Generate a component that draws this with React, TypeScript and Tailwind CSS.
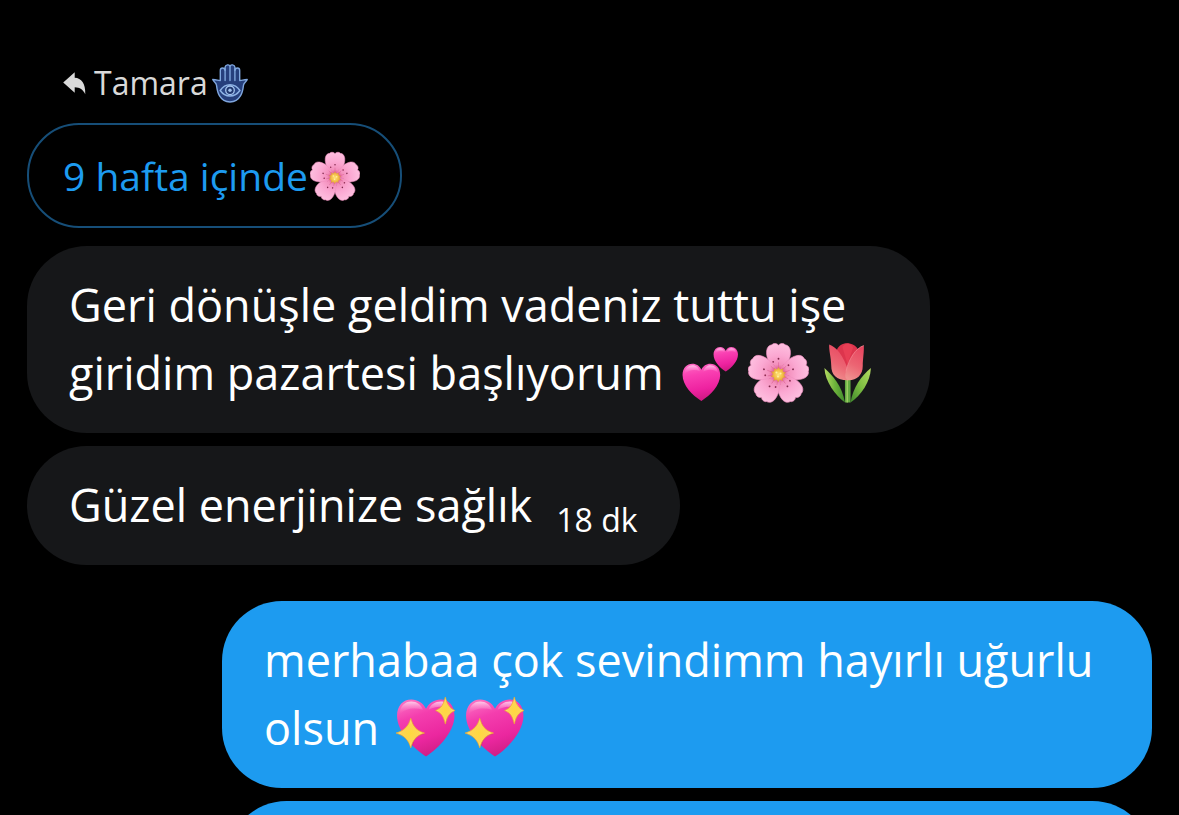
import type { ReactNode } from "react";

type EmojiProps = { className?: string };

const inlineEmoji = "mx-1 inline-block size-[61px] align-[-13px]";

const petalAngles = [0, 72, 144, 216, 288];

function ReplyArrow() {
  return (
    <svg viewBox="0 0 22 22" className="h-[23px] w-[23px]" fill="#d9d9d9" aria-hidden="true">
      <path d="M11.200.3v5.300C17.600 6 21.600 10.600 21.300 21.400c-2.200-4.600-5-6.600-10.100-6.700v5.200L.2 10z" />
    </svg>
  );
}

function Hamsa({ className }: EmojiProps) {
  return (
    <svg viewBox="0 0 36 42" className={className} role="img" aria-label="🪬">
      <path
        d="M8.300 18.500V8.400c0-3.200 4.300-3.200 4.800 0V5.200c.4-2.900 4.200-2.900 4.900-1.200.7-1.700 4.500-1.700 4.900 1.200v3.200c.5-3.200 4.800-3.200 4.800 0v10.100c2.400.1 3.500-.9 7.500-1-.8 2.400-3.300 2.800-3.700 5.700-.5 4-.8 7-2.900 10.500-2.100 3.600-5.400 6.300-10.600 6.300S9.500 37.300 7.400 33.700c-2.100-3.500-2.400-6.500-2.900-10.500-.4-2.900-2.900-3.300-3.700-5.700 4 .1 5.100 1.100 7.500 1z"
        fill="#263f7c"
        stroke="#7fa6dd"
        strokeWidth="1.400"
        strokeLinejoin="round"
      />
      <path d="M13.100 7v11.500M18 4v14.500M22.900 7v11.500" fill="none" stroke="#7fa6dd" strokeWidth="1.400" strokeLinecap="round" />
      <path d="M8.200 28.500c5-7.600 14.600-7.600 19.700 0-5.100 7.300-14.700 7.300-19.700 0z" fill="#2a4687" stroke="#8fb4e6" strokeWidth="1.400" />
      <circle cx="18" cy="28.300" r="4.300" fill="#21376f" stroke="#a5c6ef" strokeWidth="1.300" />
      <circle cx="18" cy="28.300" r="1.700" fill="#9dc0ec" />
    </svg>
  );
}

function Blossom({ className }: EmojiProps) {
  return (
    <svg viewBox="0 0 60 60" className={className} role="img" aria-label="🌸">
      <defs>
        <radialGradient id="petal" gradientUnits="userSpaceOnUse" cx="30" cy="31" r="30">
          <stop offset="0.100" stopColor="#d94f84" />
          <stop offset="0.300" stopColor="#f391bd" />
          <stop offset="0.600" stopColor="#fba8d2" />
          <stop offset="1" stopColor="#fec0e0" />
        </radialGradient>
        <radialGradient id="pollen">
          <stop offset="0" stopColor="#ffe47b" />
          <stop offset="0.600" stopColor="#f2bd45" />
          <stop offset="1" stopColor="#d98d3c" />
        </radialGradient>
      </defs>
      {petalAngles.map((angle) => (
        <g key={angle} transform={`rotate(${angle} 30 31.500)`}>
          <path
            d="M30 31.500C24 26.500 17.200 17 18.300 8.500c.5-3.500 2.700-5.600 5.200-5.700 1-1.700 4.900-2 6.500.4 1.600-2.400 5.500-2.100 6.500-.4 2.500.1 4.700 2.200 5.200 5.700C42.800 17 36 26.500 30 31.500z"
            fill="url(#petal)"
            stroke="#f08fc0"
            strokeWidth="0.600"
          />
          <path d="M30 27v-7M28 28l-3-6M32 28l3-6" stroke="#d7588e" strokeWidth="0.500" fill="none" />
          <circle cx="30" cy="16.500" r="0.900" fill="#7d2448" />
          <circle cx="24.800" cy="19.500" r="0.900" fill="#8d2a50" />
        </g>
      ))}
      <path
        d="M30 24.500l1.600 2.600 2.900-1-.2 3 2.900.8-1.800 2.300 1.700 2.500-3 .6v3l-2.700-1.300L29.800 39.600l-1.600-2.500-3 .9.300-3-2.900-.9 1.900-2.300-1.800-2.500 3-.5-.1-3 2.800 1.200z"
        fill="url(#pollen)"
      />
      <g fill="#fff0a0">
        <circle cx="28" cy="30" r="1" />
        <circle cx="32" cy="31" r="1" />
        <circle cx="29.500" cy="34" r="1" />
      </g>
    </svg>
  );
}

function TwoHearts({ className }: EmojiProps) {
  return (
    <svg viewBox="0 0 60 60" className={className} role="img" aria-label="💕">
      <defs>
        <linearGradient id="twoHearts" x1="0" y1="0" x2="0.200" y2="1">
          <stop offset="0" stopColor="#ff6fc5" />
          <stop offset="0.350" stopColor="#f93fb2" />
          <stop offset="0.750" stopColor="#ee22a0" />
          <stop offset="1" stopColor="#d31a86" />
        </linearGradient>
        <linearGradient id="twoHeartsShine" x1="0" y1="0" x2="0" y2="1">
          <stop offset="0" stopColor="#ffd0ef" stopOpacity="0.850" />
          <stop offset="1" stopColor="#ff7aca" stopOpacity="0" />
        </linearGradient>
      </defs>
      <path d="M22 58C13 52.500 3.500 42.500 3.500 32.500c0-6.800 4.200-11 9.700-11 4 0 7.100 2.200 8.800 5.800 1.700-3.600 4.800-5.800 8.800-5.800 5.500 0 9.700 4.200 9.700 11C40.500 42.500 31 52.500 22 58z" fill="url(#twoHearts)" />
      <path d="M5.500 31.500c0-5 3-8.700 7.700-8.700 4 0 6.300 2.500 7.300 6-5-2-10.700-1.600-15 2.700zM24 29c1-4 3.500-6.200 6.800-6.200 4.300 0 7.200 3 7.700 7.700-4-4-9.500-3.700-14.500-1.500z" fill="url(#twoHeartsShine)" />
      <path d="M46 29C40 25.500 34 18.700 34 12.300 34 8 36.900 5 40.500 5c2.500 0 4.500 1.400 5.500 3.900C47 6.400 49 5 51.500 5 55.100 5 58 8 58 12.300 58 18.700 52 25.500 46 29z" fill="url(#twoHearts)" />
      <path d="M35.500 11c.3-3 2.200-4.900 5-4.900 2.500 0 4 1.500 4.700 4-3.400-1.500-6.700-1.100-9.700.9zM47 10c.7-2.500 2.200-3.900 4.500-3.900 2.900 0 4.800 1.900 5 4.900-2.900-2-6.200-2.500-9.500-1z" fill="url(#twoHeartsShine)" />
    </svg>
  );
}

function Tulip({ className }: EmojiProps) {
  return (
    <svg viewBox="0 0 60 60" className={className} role="img" aria-label="🌷">
      <defs>
        <linearGradient id="tulipPetal" x1="0.600" y1="0" x2="0.300" y2="1">
          <stop offset="0" stopColor="#e84760" />
          <stop offset="0.550" stopColor="#ec6573" />
          <stop offset="1" stopColor="#f09190" />
        </linearGradient>
        <linearGradient id="tulipLeaf" x1="0" y1="0" x2="1" y2="0">
          <stop offset="0" stopColor="#b6dc62" />
          <stop offset="0.500" stopColor="#6fb43c" />
          <stop offset="1" stopColor="#3f8a2c" />
        </linearGradient>
        <linearGradient id="tulipLeafRight" x1="1" y1="0" x2="0" y2="1">
          <stop offset="0" stopColor="#b6dc62" />
          <stop offset="0.500" stopColor="#7fbf43" />
          <stop offset="1" stopColor="#3f8a2c" />
        </linearGradient>
      </defs>
      <path d="M27.500 35h5.500v24.500h-5.500z" fill="#63aa42" />
      <path d="M29 35h1.500v24.500H29z" fill="#9bcb62" />
      <path d="M27.500 59.500C18 52.500 8 39 7.300 25.500c8.200 7.500 17.200 17 20.200 34z" fill="url(#tulipLeaf)" />
      <path d="M33 59.500c2-14 11-27 20-34C52.500 39 43.500 52.500 33 59.500z" fill="url(#tulipLeafRight)" />
      <path d="M19.500 8C21 3.500 25 1.200 29.500 1.200S39 3.500 40.500 8L36 30H24z" fill="#dd354d" />
      <path d="M25 5c1.500-2.500 3.500-3.500 5-3.500S34 3 35.500 5.500L30 22z" fill="#e83f55" />
      <path d="M12 2.500C19 5 26 13 31 29c.4 4 .2 7-1 8.500C19 37.500 14 32 14 23 14 16 11.500 8 12 2.500z" fill="url(#tulipPetal)" />
      <path d="M46 3.500C38 6 31 17 28 31c-.5 3 0 5 2 6.500 9 .5 15-5 15-14C45 17 46.500 9 46 3.500z" fill="url(#tulipPetal)" />
      <path d="M46 3.500C38 6 31 17 28.500 29" stroke="#f78c95" strokeWidth="0.700" fill="none" />
    </svg>
  );
}

function SparklingHeart({ className }: EmojiProps) {
  return (
    <svg viewBox="0 0 60 60" className={className} role="img" aria-label="💖">
      <defs>
        <linearGradient id="bigHeart" x1="0.200" y1="0" x2="0.550" y2="1">
          <stop offset="0" stopColor="#fb70c3" />
          <stop offset="0.300" stopColor="#f43eae" />
          <stop offset="0.700" stopColor="#eb279f" />
          <stop offset="1" stopColor="#cf1e84" />
        </linearGradient>
        <linearGradient id="bigHeartShine" x1="0" y1="0" x2="0" y2="1">
          <stop offset="0" stopColor="#ffd5ee" stopOpacity="0.900" />
          <stop offset="1" stopColor="#fa69bd" stopOpacity="0" />
        </linearGradient>
        <radialGradient id="sparkle">
          <stop offset="0" stopColor="#ffd83e" />
          <stop offset="0.600" stopColor="#fdd455" />
          <stop offset="1" stopColor="#ffe98c" />
        </radialGradient>
      </defs>
      <path d="M30.500 58.500C17 50 2 33.500 2 18.500 2 8.500 8 2.500 16 2.500c6.500 0 11.500 3.500 14.500 9 3-5.500 8-9 14.500-9 8 0 13.500 6 13.500 16 0 15-14.500 31.500-28 40z" fill="url(#bigHeart)" />
      <path d="M4.500 17C5 9 9.500 4.500 16 4.500c5.500 0 9.500 3 11.500 8C19 10 10 11 4.500 17zM33 12.500c2-5 6.500-8 12-8 4.500 0 8 2.500 9.800 6-6-2-15-1.500-21.800 2z" fill="url(#bigHeartShine)" />
      <path d="M17.500 24c1.200 8 3.500 11 11.500 12.500-8 1.500-10.300 4.500-11.500 12.500-1.200-8-4-11-12-12.500 8-1.500 10.800-4.500 12-12.500z" fill="#a51876" opacity="0.450" />
      <path d="M15.500 21c2.200 7.500 5 12 13.500 14.500C20.500 38 17.700 42.500 15.500 50 13.300 42.500 9.500 38 1 35.500 9.500 33 13.300 28.500 15.500 21z" fill="url(#sparkle)" stroke="#efa82b" strokeWidth="0.700" />
      <path d="M49.500 0c1.800 7.200 3.500 10.700 9.500 13.300-6 2.600-7.700 6-9.500 13.200-1.800-7.200-3.500-10.600-9.500-13.200 6-2.600 7.700-6.100 9.500-13.300z" fill="url(#sparkle)" stroke="#efa82b" strokeWidth="0.700" />
    </svg>
  );
}

function Bubble({ className, children }: { className: string; children?: ReactNode }) {
  return (
    <div className={`rounded-[60px] px-[42px] pt-[25px] pb-[26px] text-[45px] leading-[68px] ${className}`}>
      {children}
    </div>
  );
}

export default function App() {
  return (
    <main className="flex h-screen flex-col overflow-hidden bg-black px-[27px] pt-[59px] font-['Open_Sans',sans-serif] text-white">
      <div className="flex h-12 shrink-0 items-center pl-9 text-[32px] leading-[48px] text-[#d9d9d9]">
        <ReplyArrow />
        <span className="ml-2">Tamara</span>
        <Hamsa className="ml-1 h-[42px] w-9" />
      </div>

      <div className="mt-4 flex h-[105px] shrink-0 items-center self-start rounded-[52px] border-2 border-[#164e78] pr-10 pl-[34px] text-[39px] leading-[56px] text-[#1d9bf0]">
        <span>9 hafta içinde</span>
        <Blossom className="ml-0.5 size-[50px]" />
      </div>

      <div className="mt-[18px] flex shrink-0 flex-col items-start gap-[13px]">
        <Bubble className="max-w-[903px] bg-[#161719]">
          <p>
            Geri dönüşle geldim vadeniz tuttu işe giridim pazartesi başlıyorum{" "}
            <span className="whitespace-nowrap">
              <TwoHearts className={inlineEmoji} />
              <Blossom className={inlineEmoji} />
              <Tulip className={inlineEmoji} />
            </span>
          </p>
        </Bubble>
        <Bubble className="flex items-baseline gap-6 bg-[#161719]">
          <p>Güzel enerjinize sağlık</p>
          <time className="relative top-[10px] text-[32px] leading-none">18 dk</time>
        </Bubble>
      </div>

      <div className="mt-9 flex shrink-0 flex-col items-end gap-[13px]">
        <Bubble className="max-w-[930px] bg-[#1d9bf0]">
          <p>
            merhabaa çok sevindimm hayırlı uğurlu olsun{" "}
            <span className="whitespace-nowrap">
              <SparklingHeart className={inlineEmoji} />
              <SparklingHeart className={inlineEmoji} />
            </span>
          </p>
        </Bubble>
        <Bubble className="min-h-[119px] w-full max-w-[925px] bg-[#1d9bf0]" />
      </div>
    </main>
  );
}
